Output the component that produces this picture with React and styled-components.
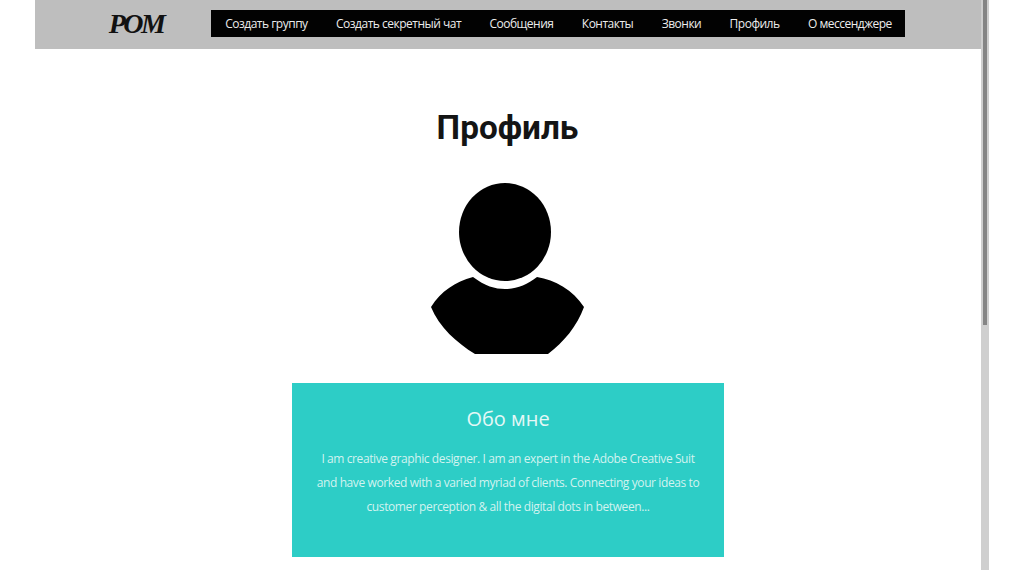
import styled, { createGlobalStyle } from "styled-components";

const GlobalStyle = createGlobalStyle`
  html, body {
    margin: 0;
    padding: 0;
    background: #fff;
    overflow: hidden;
  }
`

const Screen = styled.div`
  display: flex;
  width: 1024px;
  height: 570px;
  padding-left: 35px;
  box-sizing: border-box;
  overflow: hidden;
`
const Page = styled.div`
  width: 946px;
  display: flex;
  flex-direction: column;
  align-items: center;
`
const Header = styled.header`
  align-self: stretch;
  height: 49px;
  background: #bebebe;
  display: flex;
  padding-top: 10px;
  box-sizing: border-box;
`
const Brand = styled.div`
  width: 176px;
  height: 27px;
  display: flex;
  align-items: center;
  justify-content: center;
  padding-left: 26px;
  box-sizing: border-box;
  font-family: "Liberation Serif", serif;
  font-style: italic;
  font-weight: 700;
  font-size: 28px;
  letter-spacing: -2.6px;
  color: #111;
`
const Nav = styled.nav`
  width: 694px;
  height: 27px;
  background: #020202;
  display: flex;
  align-items: center;
`
const NavLink = styled.a`
  padding: 0 14.2px;
  font-family: "Open Sans", sans-serif;
  font-size: 12px;
  letter-spacing: -0.5px;
  color: #ececec;
  white-space: nowrap;
`
const Title = styled.h1`
  margin: 57px 0 0 -1px;
  font-family: Roboto, sans-serif;
  font-weight: 700;
  font-size: 33.3px;
  line-height: 44px;
  color: #141414;
`
const Avatar = styled.svg`
  display: block;
  width: 154px;
  height: 172px;
  margin: 33px 0 0 -1px;
`
const Card = styled.section`
  width: 432px;
  height: 174px;
  margin: 28px 0 0 0;
  padding-top: 22px;
  box-sizing: border-box;
  background: #2dcdc6;
  text-align: center;
`
const CardTitle = styled.h2`
  margin: 0;
  font-family: "Open Sans", sans-serif;
  font-weight: 400;
  font-size: 20px;
  line-height: 28px;
  color: #e4f8f6;
`
const CardText = styled.p`
  margin: 14px 0 0;
  font-family: "Open Sans", sans-serif;
  font-size: 12px;
  letter-spacing: -0.4px;
  line-height: 24px;
  color: #d2f3f0;
`
const Scrollbar = styled.div`
  width: 8px;
  height: 570px;
  background: #cfcfcf;
`
const Thumb = styled.div`
  width: 4px;
  height: 325px;
  margin-left: 2px;
  background: #858585;
`

const links = ["Создать группу", "Создать секретный чат", "Сообщения", "Контакты", "Звонки", "Профиль", "О мессенджере"];

function App() {
  return (
    <Screen>
      <GlobalStyle />
      <Page>
        <Header>
          <Brand>POM</Brand>
          <Nav>
            {links.map((link) => (
              <NavLink key={link}>{link}</NavLink>
            ))}
          </Nav>
        </Header>
        <Title>Профиль</Title>
        <Avatar viewBox="0 0 154 172">
          <ellipse cx="74" cy="49" rx="46" ry="49" fill="#000" />
          <path
            d="M42 94 C54 103 64 106 74 106 C85 106 96 102 106 94 C124 97 142 107 153 124 C146 143 133 159 117 171 L44 171 C26 160 8 144 0 124 C10 108 24 99 42 94 Z"
            fill="#000"
          />
        </Avatar>
        <Card>
          <CardTitle>Обо мне</CardTitle>
          <CardText>
            I am creative graphic designer. I am an expert in the Adobe Creative Suit
            <br />
            and have worked with a varied myriad of clients. Connecting your ideas to
            <br />
            customer perception &amp; all the digital dots in between...
          </CardText>
        </Card>
      </Page>
      <Scrollbar>
        <Thumb />
      </Scrollbar>
    </Screen>
  );
}
export default App;
